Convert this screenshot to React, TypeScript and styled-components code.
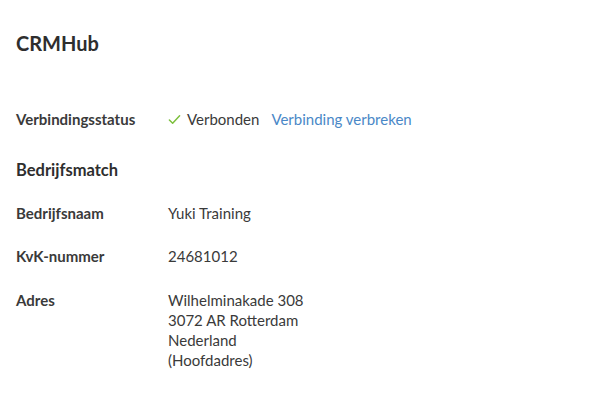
import styled, { createGlobalStyle } from 'styled-components';

const GlobalStyle = createGlobalStyle`
  body {
    margin: 0;
    background: #ffffff;
    font-family: Lato, "Open Sans", sans-serif;
    color: #333333;
  }
`;

type Row = { label: string; lines: string[] };

const rows: Row[] = [
  { label: 'Bedrijfsnaam', lines: ['Yuki Training'] },
  { label: 'KvK-nummer', lines: ['24681012'] },
  { label: 'Adres', lines: ['Wilhelminakade 308', '3072 AR Rotterdam', 'Nederland', '(Hoofdadres)'] },
];

export default function App() {
  return (
    <>
      <GlobalStyle />
      <Page>
        <Title>CRMHub</Title>
        <StatusRow>
          <Label>Verbindingsstatus</Label>
          <Value>
            <Status>
              <CheckIcon viewBox="0 0 14 14">
                <path d="M1.5 7.5 L5 11 L12.5 3" />
              </CheckIcon>
              Verbonden
            </Status>
            <Link href="#">Verbinding verbreken</Link>
          </Value>
        </StatusRow>
        <SectionTitle>Bedrijfsmatch</SectionTitle>
        <Fields>
          {rows.map((row) => (
            <FieldRow key={row.label}>
              <Label>{row.label}</Label>
              <Value>
                <Lines>
                  {row.lines.map((line) => (
                    <span key={line}>{line}</span>
                  ))}
                </Lines>
              </Value>
            </FieldRow>
          ))}
        </Fields>
      </Page>
    </>
  );
}

const Page = styled.div`
  padding: 30px 16px 0 16px;
  display: flex;
  flex-direction: column;
`;

const Title = styled.h1`
  margin: 0;
  font-size: 20px;
  font-weight: 700;
  line-height: 26px;
  color: #2e2e2e;
`;

const StatusRow = styled.div`
  display: grid;
  grid-template-columns: 152px 1fr;
  align-items: center;
  margin-top: 53px;
  font-size: 15px;
  line-height: 20px;
`;

const Label = styled.div`
  font-weight: 700;
  color: #3a3a3a;
`;

const Value = styled.div`
  display: flex;
  align-items: center;
  gap: 12px;
  color: #3a3a3a;
`;

const Status = styled.span`
  display: inline-flex;
  align-items: center;
  gap: 6px;
`;

const CheckIcon = styled.svg`
  width: 13px;
  height: 13px;
  fill: none;
  stroke: #7cbf3c;
  stroke-width: 1.6;
  stroke-linecap: round;
  stroke-linejoin: round;
`;

const Link = styled.a`
  color: #4a88c7;
  text-decoration: none;
`;

const SectionTitle = styled.h2`
  margin: 31px 0 0 0;
  font-size: 16.5px;
  font-weight: 700;
  line-height: 20px;
  color: #2e2e2e;
`;

const Fields = styled.div`
  display: flex;
  flex-direction: column;
  gap: 23px;
  margin-top: 23px;
  font-size: 15px;
  line-height: 20.3px;
`;

const FieldRow = styled.div`
  display: grid;
  grid-template-columns: 152px 1fr;
  align-items: start;
`;

const Lines = styled.div`
  display: flex;
  flex-direction: column;
`;
